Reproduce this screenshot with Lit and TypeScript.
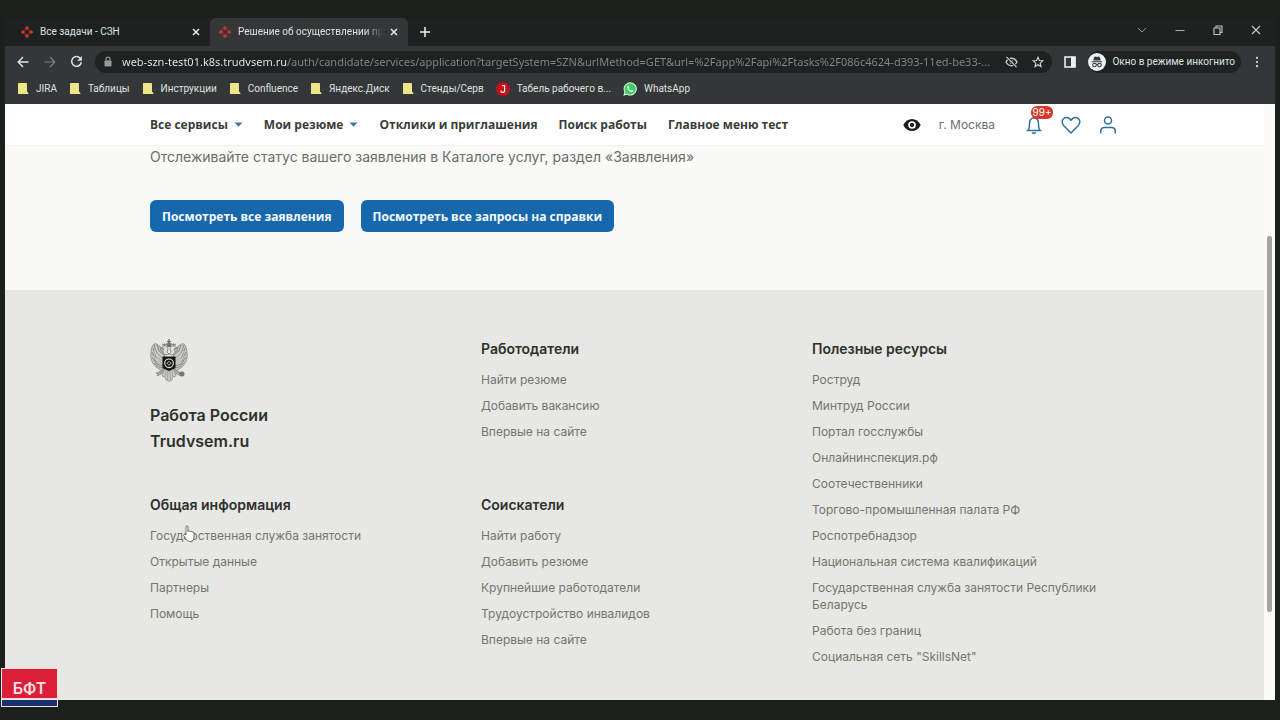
import { LitElement, html, css, svg, nothing } from "lit";
import { customElement } from "lit/decorators.js";

const favicon = html`<svg class="fav" viewBox="0 0 12 12" aria-hidden="true">
  <g fill="#c5362c">
    <rect x="4.4" y="0.4" width="3.2" height="3.2" transform="rotate(45 6 2)" />
    <rect x="0.4" y="4.4" width="3.2" height="3.2" transform="rotate(45 2 6)" />
    <rect x="8.4" y="4.4" width="3.2" height="3.2" transform="rotate(45 10 6)" />
    <rect x="4.4" y="8.4" width="3.2" height="3.2" transform="rotate(45 6 10)" />
  </g>
  <path d="M3.4 3.4l1.2 1.2M8.6 3.4L7.4 4.6M3.4 8.6l1.2-1.2M8.6 8.6L7.4 7.4" stroke="#8e3029" stroke-width="1.2" />
</svg>`;

const cross = html`<svg width="8" height="8" viewBox="0 0 8 8" aria-hidden="true">
  <path d="M1 1l6 6M7 1L1 7" stroke="#e8eaea" stroke-width="1.5" />
</svg>`;

const folder = html`<svg class="bm-icon" viewBox="0 0 12 13" aria-hidden="true">
  <path d="M1 1.6Q1 1 1.6 1H9.2Q10 1 10 1.8V9.5L11.4 11V12H1.6Q1 12 1 11.4Z" fill="#f0e489" />
</svg>`;

const jiraMark = html`<svg class="bm-round" viewBox="0 0 14 14" aria-hidden="true">
  <circle cx="7" cy="7" r="7" fill="#c4101c" />
  <path d="M6 3.6h2.6v4.8a1.9 1.9 0 0 1-3.8.2" fill="none" stroke="#fff" stroke-width="1.2" />
</svg>`;

const whatsMark = html`<svg class="bm-round" viewBox="0 0 14 14" aria-hidden="true">
  <path d="M7.2.3A6.6 6.6 0 0 0 1.4 10L.3 13.7l3.8-1A6.6 6.6 0 1 0 7.2.3z" fill="#eafbe9" />
  <path d="M7.2 1.2A5.7 5.7 0 0 0 2.4 10l-.7 2.3 2.4-.6A5.7 5.7 0 1 0 7.2 1.2z" fill="#3fcf61" />
  <path d="M5 3.7c-.9.6-1 1.600-.3 3 .9 1.700 2.100 2.900 3.900 3.400 1 .2 1.800-.4 1.900-1.400L8.900 7.800l-.8.9C7 8.200 6.200 7.400 5.700 6.300l.7-.8z" fill="#fff" />
</svg>`;

const eagleWing = svg`
  <path d="M15 12C12 12 11 8 8 7C7 5 4 6 4 6C2 8 1 11 1 15C0 20 2 25 6 29L12 33L14 29Z" fill="#c4c5c1" stroke="#7b7c78" stroke-width=".7" />
  <path d="M4 7l3 8 6 5M3 10l3 9 7 4M2 14l4 9 7 3M2 19l5 7 6 2M7 7l2 6 5 4M4 25l5 4 4 1M10 9l1 4 3 2" fill="none" stroke="#7b7c78" stroke-width=".8" />
  <path d="M6 9l2 6 5 4M4 13l4 7 5 3M3 18l5 6 5 2" fill="none" stroke="#e7e8e3" stroke-width=".6" />
  <path d="M16 17c-3-1-4-4-2-6l-3-1 3-2c2-1 4 1 4 3l-1 3 2 2z" fill="#dcddd8" stroke="#6b6c68" stroke-width=".7" />
  <path d="M12 7.500l.5-2 1.200 1 .8-1.500.8 1.500 1.200-1-.2 2z" fill="#7b7c78" />
  <path d="M13 31l-4 3-3 1 2 1-1 2 4-2 4-3z" fill="#a5a6a2" stroke="#7b7c78" stroke-width=".6" />`;

const eagle = html`<svg class="emblem" viewBox="0 0 38 44" role="img" aria-label="Герб">
  ${eagleWing}
  <g transform="matrix(-1 0 0 1 38 0)">${eagleWing}</g>
  <path d="M14 32h10l2 6-3 1-1 3-3 1.500-3-1.500-1-3-3-1z" fill="#cbccc8" stroke="#8b8c88" stroke-width=".7" />
  <path d="M16 33l-1 6M18 33l-.5 9M20 33l.5 9M22 33l1 6" stroke="#8b8c88" stroke-width=".7" />
  <path d="M16.500 7l.2-2.500 1.300 1V4h-1V3h1.300V1h1.400v2H21v1h-1v1.500l1.300-1 .2 2.500-1 2h-3z" fill="#70716d" />
  <circle cx="32" cy="36" r="2.200" fill="#7b7c78" stroke="#60615d" stroke-width=".6" />
  <path d="M12.500 18.500h13V29c0 2-3.500 2.500-6.500 4-3-1.500-6.500-2-6.500-4z" fill="#141513" />
  <circle cx="19" cy="25.300" r="4.300" fill="none" stroke="#e7e8e3" stroke-width="1.100" />
  <path d="M19 23.300l2 2-2 2-2-2z" fill="none" stroke="#e7e8e3" stroke-width=".9" />
</svg>`;

const bookmarks = ["JIRA", "Таблицы", "Инструкции", "Confluence", "Яндекс.Диск", "Стенды/Серв"];

const sections = {
  employers: { title: "Работодатели", links: ["Найти резюме", "Добавить вакансию", "Впервые на сайте"] },
  resources: {
    title: "Полезные ресурсы",
    links: [
      "Роструд", "Минтруд России", "Портал госслужбы", "Онлайнинспекция.рф", "Соотечественники",
      "Торгово-промышленная палата РФ", "Роспотребнадзор", "Национальная система квалификаций",
      "Государственная служба занятости Республики Беларусь", "Работа без границ", 'Социальная сеть "SkillsNet"',
    ],
  },
  general: {
    title: "Общая информация",
    links: ["Государственная служба занятости", "Открытые данные", "Партнеры", "Помощь"],
  },
  seekers: {
    title: "Соискатели",
    links: ["Найти работу", "Добавить резюме", "Крупнейшие работодатели", "Трудоустройство инвалидов", "Впервые на сайте"],
  },
};

@customElement("browser-chrome")
class BrowserChrome extends LitElement {
  static styles = css`
    :host { display: block; font: 10px/14px Roboto, "Noto Sans", sans-serif; color: #dfe1e1; }
    button { border: 0; padding: 0; background: none; color: inherit; font: inherit; display: grid; place-items: center; }
    svg { display: block; flex: none; }
    .tabs { display: flex; height: 28px; padding-left: 7px; align-items: stretch; background: #1d2120; }
    .tab { display: flex; align-items: center; flex: 0 1 198px; box-sizing: border-box; padding: 0 10px 0 9px; gap: 7px; min-width: 0; }
    .tab.active { background: #343737; border-radius: 6px 6px 0 0; }
    .fav { width: 12px; height: 12px; }
    .tab-title { flex: 1; overflow: hidden; white-space: nowrap; }
    .active .tab-title { -webkit-mask-image: linear-gradient(to right, #000 88%, transparent); mask-image: linear-gradient(to right, #000 88%, transparent); }
    .new { width: 34px; }
    .win { margin-left: auto; display: flex; }
    .win button { width: 38px; padding-bottom: 4px; }
    .toolbar { display: flex; align-items: center; height: 31px; background: #343737; padding: 0 8px 0 4px; }
    .nav button { width: 27px; height: 21px; }
    .nav { display: flex; }
    .address { flex: 1; display: flex; align-items: center; height: 22px; border-radius: 11px; background: #1e2221; margin-left: 5px; padding: 0 6px 0 8px; gap: 9px; min-width: 0; }
    .url { flex: 1; min-width: 0; border: 0; padding: 0; outline: 0; font: 11px/16px "Noto Sans", sans-serif; text-overflow: ellipsis;
      color: transparent; background: linear-gradient(to right, #eceeee 165px, #858888 165px); -webkit-background-clip: text; background-clip: text; }
    .address button { width: 17px; height: 18px; }
    .panel { width: 36px; height: 20px; }
    .incognito { display: flex; align-items: center; height: 22px; background: #1e2221; border-radius: 11px; gap: 6px; padding-right: 6px; }
    .menu { width: 20px; height: 20px; margin-left: 6px; }
    .bookmarks { display: flex; align-items: center; height: 27px; padding: 0 12px 4px; box-sizing: border-box; background: #343737; gap: 12px; }
    .bookmarks a { display: flex; align-items: center; gap: 7px; color: inherit; text-decoration: none; white-space: nowrap; }
    .bm-icon { width: 12px; height: 13px; }
    .bm-round { width: 14px; height: 14px; }
  `;

  render() {
    return html`
      <div class="tabs">
        <div class="tab">${favicon}<span class="tab-title">Все задачи - СЗН</span><button aria-label="Закрыть вкладку">${cross}</button></div>
        <div class="tab active">${favicon}<span class="tab-title">Решение об осуществлении пр</span><button aria-label="Закрыть вкладку">${cross}</button></div>
        <button class="new" aria-label="Новая вкладка"><svg width="10" height="10" viewBox="0 0 10 10"><path d="M5 0v10M0 5h10" stroke="#f0f2f2" stroke-width="1.500" /></svg></button>
        <div class="win">
          <button aria-label="Поиск вкладок"><svg width="10" height="10" viewBox="0 0 10 10"><path d="M1 3l4 4 4-4" fill="none" stroke="#8c9090" /></svg></button>
          <button aria-label="Свернуть"><svg width="10" height="10" viewBox="0 0 10 10"><path d="M.5 5.500h9" stroke="#a9acac" /></svg></button>
          <button aria-label="Развернуть"><svg width="10" height="10" viewBox="0 0 10 10"><path d="M1 3h6v6.500H1zM3 3V1h6v6.500H7" fill="none" stroke="#c3c6c6" stroke-width="1.100" /></svg></button>
          <button aria-label="Закрыть"><svg width="10" height="10" viewBox="0 0 10 10"><path d="M1 1l8 8M9 1L1 9" stroke="#c8cbcb" stroke-width="1.100" /></svg></button>
        </div>
      </div>
      <div class="toolbar">
        <div class="nav">
          <button aria-label="Назад"><svg width="12" height="12" viewBox="0 0 12 12"><path d="M6 1L1.200 6 6 11M1.200 6H11.500" fill="none" stroke="#e3e5e5" stroke-width="1.400" /></svg></button>
          <button aria-label="Вперед"><svg width="12" height="12" viewBox="0 0 12 12"><path d="M6 1l4.800 5L6 11M10.800 6H.5" fill="none" stroke="#7c7f7f" stroke-width="1.200" /></svg></button>
          <button aria-label="Обновить"><svg width="13" height="13" viewBox="0 0 13 13"><path d="M10.600 3.600A4.900 4.900 0 1 0 11.400 7.200" fill="none" stroke="#e3e5e5" stroke-width="1.500" /><path d="M11.900 1v4.700H7.200z" fill="#e3e5e5" /></svg></button>
        </div>
        <div class="address">
          <svg width="10" height="12" viewBox="0 0 10 12"><path d="M3 5V3.200a2 2 0 0 1 4 0V5" fill="none" stroke="#979a9a" stroke-width="1.200" /><rect x="1.500" y="4.500" width="7" height="6" rx=".8" fill="#979a9a" /></svg>
          <input class="url" aria-label="Адрес" readonly value="web-szn-test01.k8s.trudvsem.ru/auth/candidate/services/application?targetSystem=SZN&urlMethod=GET&url=%2Fapp%2Fapi%2Ftasks%2F086c4624-d393-11ed-be33-..." />
          <button aria-label="Сторонние файлы cookie"><svg width="13" height="12" viewBox="0 0 13 12"><path d="M1 6c2.600-5 8.400-5 11 0-2.600 5-8.400 5-11 0z" fill="none" stroke="#c9cccc" stroke-width="1.300" /><circle cx="6.500" cy="6" r="1.900" fill="#c9cccc" /><path d="M1.500 .8l10 10.400" stroke="#1e2221" stroke-width="2.600" /><path d="M1.500 .8l10 10.400" stroke="#c9cccc" stroke-width="1.200" /></svg></button>
          <button aria-label="Добавить в закладки"><svg width="12" height="12" viewBox="0 0 12 12"><path d="M6 1.300l1.400 3.200 3.500.3-2.700 2.300.8 3.400L6 8.700 3 10.500l.8-3.400L1.100 4.800l3.500-.3z" fill="none" stroke="#d5d8d8" stroke-width="1.100" /></svg></button>
        </div>
        <button class="panel" aria-label="Боковая панель"><svg width="12" height="12" viewBox="0 0 12 12"><rect x="1" y="1" width="10" height="10" fill="none" stroke="#eceeee" stroke-width="1.600" /><path d="M7 1h4.500v10H7z" fill="#eceeee" /></svg></button>
        <button class="incognito">
          <svg width="18" height="18" viewBox="0 0 18 18"><circle cx="9" cy="9" r="9" fill="#eff1f1" /><path d="M6.200 4.200l.9-.7 1.900.5 1.900-.5.9.7 1 3.400H5.200zM3.800 8.200h10.400v1.100H3.800z" fill="#34383a" /><g fill="none" stroke="#34383a" stroke-width="1.100"><circle cx="6.500" cy="12" r="1.800" /><circle cx="11.500" cy="12" r="1.800" /><path d="M8.300 11.600q.7-.5 1.400 0" /></g></svg>
          <span>Окно в режиме инкогнито</span>
        </button>
        <button class="menu" aria-label="Меню"><svg width="4" height="12" viewBox="0 0 4 12" fill="#e0e2e2"><circle cx="2" cy="1.800" r="1.100" /><circle cx="2" cy="6" r="1.100" /><circle cx="2" cy="10.200" r="1.100" /></svg></button>
      </div>
      <nav class="bookmarks">
        ${bookmarks.map((b) => html`<a href="#">${folder}${b}</a>`)}
        <a href="#">${jiraMark}Табель рабочего в...</a>
        <a href="#">${whatsMark}WhatsApp</a>
      </nav>
    `;
  }
}

@customElement("portal-page")
class PortalPage extends LitElement {
  static styles = css`
    :host { display: flex; background: #f9faf6; font: 12px/17px Inter, "Open Sans", sans-serif; color: #2e302e; }
    a { color: inherit; text-decoration: none; }
    button { font: inherit; color: inherit; border: 0; background: none; padding: 0; }
    svg { display: block; }
    .content { flex: 1; min-width: 0; display: flex; flex-direction: column; }
    .gutter { flex: none; width: 11px; background: #fafbf8; padding: 132px 3px 0; box-sizing: border-box; }
    .thumb { height: 81%; background: #a3a5a1; border-radius: 2px; }
    .wrap { width: 100%; max-width: 969px; margin: 0 auto; }
    header { background: #fff; border-bottom: 1px solid #eff0ec; }
    .bar { display: flex; align-items: center; height: 41px; }
    .menu { display: flex; gap: 21px; font-family: "Open Sans", sans-serif; font-weight: 700; white-space: nowrap; color: #3a3c3a; }
    .menu a, .menu button { display: flex; align-items: center; gap: 6px; }
    .caret { width: 9px; height: 5px; }
    .tools { display: flex; align-items: center; margin-left: auto; padding-right: 1px; }
    .city { margin: 0 29px 0 18px; color: #6a6f70; }
    .icons { display: flex; gap: 17px; }
    .icons button { position: relative; }
    .badge { position: absolute; left: 7px; top: -9px; width: 22px; height: 13px; border-radius: 6px; background: #d63a2c; color: #fff; font-size: 10px; line-height: 13px; text-align: center; }
    main { padding-bottom: 58px; }
    .note { margin: 0; padding-top: 1px; font-size: 14px; line-height: 20px; color: #6b6d6a; }
    .actions { display: flex; flex-wrap: wrap; gap: 17px; padding-top: 33px; }
    .actions button { height: 32px; padding: 0 12px; border-radius: 6px; background: #1767ad; color: #f4faff; font-family: "Open Sans", sans-serif; font-weight: 700; }
    footer { flex: 1; background: #e7e8e3; padding: 48px 0 30px; }
    .grid { display: grid; grid-template-columns: repeat(3, minmax(0, 1fr)); column-gap: 24px; row-gap: 40px; grid-template-rows: auto 1fr; }
    .tall { grid-column: 3; grid-row: 1 / span 2; }
    .emblem { width: 38px; height: 44px; margin-bottom: 20px; }
    .brand { font-size: 16px; line-height: 26px; font-weight: 600; }
    h2 { margin: 0 0 11px; font-size: 14px; line-height: 22px; font-weight: 600; }
    ul { list-style: none; margin: 0; padding: 0; display: flex; flex-direction: column; gap: 9px; color: #737571; }
    li { display: block; }
  `;

  private section(s: { title: string; links: string[] }, tall = false) {
    return html`<section class=${tall ? "tall" : nothing}>
      <h2>${s.title}</h2>
      <ul>${s.links.map((l) => html`<li><a href="#">${l}</a></li>`)}</ul>
    </section>`;
  }

  render() {
    const caret = html`<svg class="caret" viewBox="0 0 9 5"><path d="M.5.5h8L4.500 4.700z" fill="#3b789f" /></svg>`;
    return html`
      <div class="content">
        <header>
          <div class="wrap bar">
            <nav class="menu">
              <button>Все сервисы ${caret}</button>
              <button>Мои резюме ${caret}</button>
              <a href="#">Отклики и приглашения</a>
              <a href="#">Поиск работы</a>
              <a href="#">Главное меню тест</a>
            </nav>
            <div class="tools">
              <button aria-label="Версия для слабовидящих"><svg width="18" height="14" viewBox="0 0 18 14"><path d="M.3 7C4-1 14-1 17.700 7 14 15 4 15 .3 7z" fill="#1b1d1c" /><circle cx="9" cy="7" r="3" fill="none" stroke="#fff" stroke-width="1.700" /></svg></button>
              <span class="city">г. Москва</span>
              <div class="icons">
                <button aria-label="Уведомления">
                  <svg width="20" height="20" viewBox="0 0 20 20" fill="none" stroke="#327196" stroke-width="1.500"><path d="M2.500 15.500h15M4.300 15.300c.8-1.300 1.200-3 1.200-6.300C5.500 5.500 7 3 10 3s4.500 2.500 4.500 6c0 3.300.4 5 1.200 6.300M8.300 17.300c.6 1.200 2.800 1.200 3.400 0" /></svg>
                  <span class="badge">99+</span>
                </button>
                <button aria-label="Избранное"><svg width="20" height="20" viewBox="0 0 20 20" fill="none" stroke="#327196" stroke-width="1.500"><path d="M10 18L2.600 10.400C.2 7.700 1 4.400 3.300 3.100 5.700 1.800 8.500 2.700 10 5.300c1.500-2.600 4.300-3.500 6.700-2.200 2.300 1.300 3.100 4.600.7 7.300z" stroke-linejoin="round" /></svg></button>
                <button aria-label="Профиль"><svg width="20" height="20" viewBox="0 0 20 20" fill="none" stroke="#327196" stroke-width="1.500"><circle cx="10" cy="5.500" r="3.500" /><path d="M2.700 18.500v-2.200c0-2.300 1.500-3.800 3.800-3.800h7c2.300 0 3.800 1.500 3.800 3.800v2.200" /></svg></button>
              </div>
            </div>
          </div>
        </header>
        <main>
          <div class="wrap">
            <p class="note">Отслеживайте статус вашего заявления в Каталоге услуг, раздел «Заявления»</p>
            <div class="actions">
              <button>Посмотреть все заявления</button>
              <button>Посмотреть все запросы на справки</button>
            </div>
          </div>
        </main>
        <footer>
          <div class="wrap grid">
            <div>${eagle}<div class="brand">Работа России</div><div class="brand">Trudvsem.ru</div></div>
            ${this.section(sections.employers)}
            ${this.section(sections.resources, true)}
            ${this.section(sections.general)}
            ${this.section(sections.seekers)}
          </div>
        </footer>
      </div>
      <div class="gutter"><div class="thumb"></div></div>
    `;
  }
}

@customElement("app-root")
class AppRoot extends LitElement {
  static styles = css`
    :host { display: flex; flex-direction: column; position: relative; box-sizing: border-box; min-height: 100vh; padding: 18px 5px 20px; background: #1c201d; }
    portal-page { flex: 1; }
    .bft { position: absolute; left: 1px; bottom: 13px; width: 57px; background: #f0dfe3; padding: 1px; box-sizing: border-box; font: 600 16px/20px Inter, sans-serif; }
    .bft-red { background: #dc1f38; color: #fbdfe3; text-align: center; padding: 9px 0 0; }
    .bft-blue { background: #19306f; height: 6px; margin-top: 2px; }
    .hand { position: absolute; left: 183px; top: 525px; width: 13px; height: 17px; }
  `;

  render() {
    return html`
      <browser-chrome></browser-chrome>
      <portal-page></portal-page>
      <div class="bft"><div class="bft-red">БФТ</div><div class="bft-blue"></div></div>
      <svg class="hand" viewBox="0 0 13 17" aria-hidden="true">
        <path d="M3 10V2c0-1.600 2-1.600 2 0v4.500c.3-1 2-.9 2.100.3.400-.9 1.900-.7 2 .5.500-.8 1.900-.5 1.900.8V12c0 3-1.500 4.400-4 4.400-2.300 0-3.400-1-4.400-3L.8 10.700c-.6-1.300 1-2 2.200-.7z" fill="#fff" stroke="#4a4b49" stroke-width=".8" />
      </svg>
    `;
  }
}
